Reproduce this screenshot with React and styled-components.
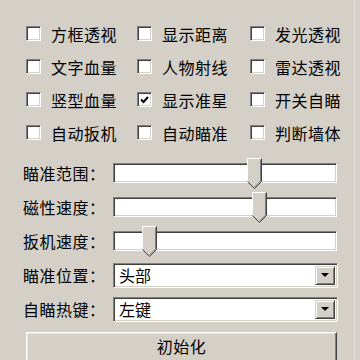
import React from 'react';
import styled, { createGlobalStyle } from 'styled-components';

const GlobalStyle = createGlobalStyle`
    html, body {
        margin: 0;
        padding: 0;
        background: #d4d0c8;
    }
    body {
        font-family: "Noto Sans CJK SC", "Noto Sans", sans-serif;
        color: #000;
    }
`;

const Panel = styled.div`
    width: 355px;
    height: 360px;
    box-sizing: border-box;
    padding: 17px 0 0 23px;
    background: #d4d0c8;
    border-right: 1px solid #e6e3de;
    overflow: hidden;
`;

const CheckGrid = styled.div`
    display: grid;
    grid-template-columns: 111px 113px 100px;
    grid-auto-rows: 33px;
    margin-left: 3px;
`;

const CheckItem = styled.label`
    display: flex;
    align-items: center;
    gap: 10px;
    font-size: 16px;
    letter-spacing: 0.5px;
    line-height: 1;
`;

const Box = styled.span`
    width: 15px;
    height: 15px;
    box-sizing: border-box;
    background: #fff;
    border-top: 1px solid #808080;
    border-left: 1px solid #808080;
    border-right: 1px solid #fff;
    border-bottom: 1px solid #fff;
    box-shadow: inset 1px 1px 0 #404040, inset -1px -1px 0 #d4d0c8;
    display: flex;
    align-items: center;
    justify-content: center;
    flex-shrink: 0;
`;

const FormRows = styled.div`
    display: flex;
    flex-direction: column;
    margin-top: 7px;
`;

const Row = styled.div`
    display: flex;
    align-items: center;
    height: 34px;
`;

const Label = styled.div`
    width: 90px;
    font-size: 16px;
    letter-spacing: 0.5px;
    white-space: nowrap;
`;

const Track = styled.div`
    position: relative;
    width: 224px;
    height: 20px;
    box-sizing: border-box;
    background: #fff;
    border-top: 1px solid #808080;
    border-left: 1px solid #808080;
    border-right: 1px solid #fff;
    border-bottom: 1px solid #fff;
    box-shadow: inset 1px 1px 0 #404040, inset -1px -1px 0 #d4d0c8;
`;

const Thumb = styled.svg`
    position: absolute;
    top: -6px;
`;

const Select = styled.div`
    display: flex;
    align-items: center;
    width: 225px;
    height: 25px;
    box-sizing: border-box;
    background: #fff;
    border-top: 1px solid #808080;
    border-left: 1px solid #808080;
    border-right: 1px solid #fff;
    border-bottom: 1px solid #fff;
    box-shadow: inset 1px 1px 0 #404040, inset -1px -1px 0 #d4d0c8;
    padding: 2px;
`;

const SelectText = styled.div`
    flex: 1;
    font-size: 16px;
    padding-left: 3px;
    line-height: 1;
`;

const ArrowButton = styled.div`
    width: 20px;
    height: 19px;
    box-sizing: border-box;
    background: #d4d0c8;
    border-top: 1px solid #d4d0c8;
    border-left: 1px solid #d4d0c8;
    border-right: 1px solid #404040;
    border-bottom: 1px solid #404040;
    box-shadow: inset 1px 1px 0 #fff, inset -1px -1px 0 #808080;
    display: flex;
    align-items: center;
    justify-content: center;
`;

const Button = styled.button`
    display: block;
    margin: 6px 0 0 3px;
    width: 311px;
    height: 30px;
    background: #d4d0c8;
    border-top: 1px solid #fff;
    border-left: 1px solid #fff;
    border-right: 1px solid #404040;
    border-bottom: 1px solid #404040;
    box-shadow: inset -1px -1px 0 #808080, inset 1px 1px 0 #e8e6e2;
    font-family: "Noto Sans CJK SC", "Noto Sans", sans-serif;
    font-size: 16px;
    letter-spacing: 0.5px;
    color: #000;
    padding: 0 0 2px;
`;

const checks = [
    ['方框透视', false], ['显示距离', false], ['发光透视', false],
    ['文字血量', false], ['人物射线', false], ['雷达透视', false],
    ['竖型血量', false], ['显示准星', true], ['开关自瞄', false],
    ['自动扳机', false], ['自动瞄准', false], ['判断墙体', false],
];

const sliders = [
    { label: '瞄准范围：', pos: 133 },
    { label: '磁性速度：', pos: 138 },
    { label: '扳机速度：', pos: 28 },
];

const selects = [
    { label: '瞄准位置：', value: '头部' },
    { label: '自瞄热键：', value: '左键' },
];

const SliderThumb = ({ pos }) => (
    <Thumb width="16" height="31" viewBox="0 0 16 31" style={{ left: pos }}>
        <path d="M0.5 0.5 H14.5 V23.5 L7.5 30.5 L0.5 23.5 Z" fill="#d4d0c8" />
        <path d="M0.5 23.5 V0.5 H14.5" stroke="#fff" fill="none" />
        <path d="M14.5 0.5 V23.5 L7.5 30.5" stroke="#404040" fill="none" />
        <path d="M13.5 1.5 V23 L7.5 29" stroke="#808080" fill="none" />
        <path d="M0.5 23.5 L7.5 30.5" stroke="#404040" fill="none" />
    </Thumb>
);

const App = () => {
    return (
        <>
            <GlobalStyle />
            <Panel>
                <CheckGrid>
                    {checks.map(([text, on]) => (
                        <CheckItem key={text}>
                            <Box>
                                {on && (
                                    <svg width="9" height="8" viewBox="0 0 9 8">
                                        <path d="M1 3.5 L3.5 6 L8 1" stroke="#000" strokeWidth="2" fill="none" />
                                    </svg>
                                )}
                            </Box>
                            {text}
                        </CheckItem>
                    ))}
                </CheckGrid>
                <FormRows>
                    {sliders.map((s) => (
                        <Row key={s.label}>
                            <Label>{s.label}</Label>
                            <Track>
                                <SliderThumb pos={s.pos} />
                            </Track>
                        </Row>
                    ))}
                    {selects.map((s) => (
                        <Row key={s.label}>
                            <Label>{s.label}</Label>
                            <Select>
                                <SelectText>{s.value}</SelectText>
                                <ArrowButton>
                                    <svg width="8" height="4" viewBox="0 0 8 4">
                                        <path d="M0 0 H8 L4 4 Z" fill="#000" />
                                    </svg>
                                </ArrowButton>
                            </Select>
                        </Row>
                    ))}
                </FormRows>
                <Button>初始化</Button>
            </Panel>
        </>
    );
};

export default App;
